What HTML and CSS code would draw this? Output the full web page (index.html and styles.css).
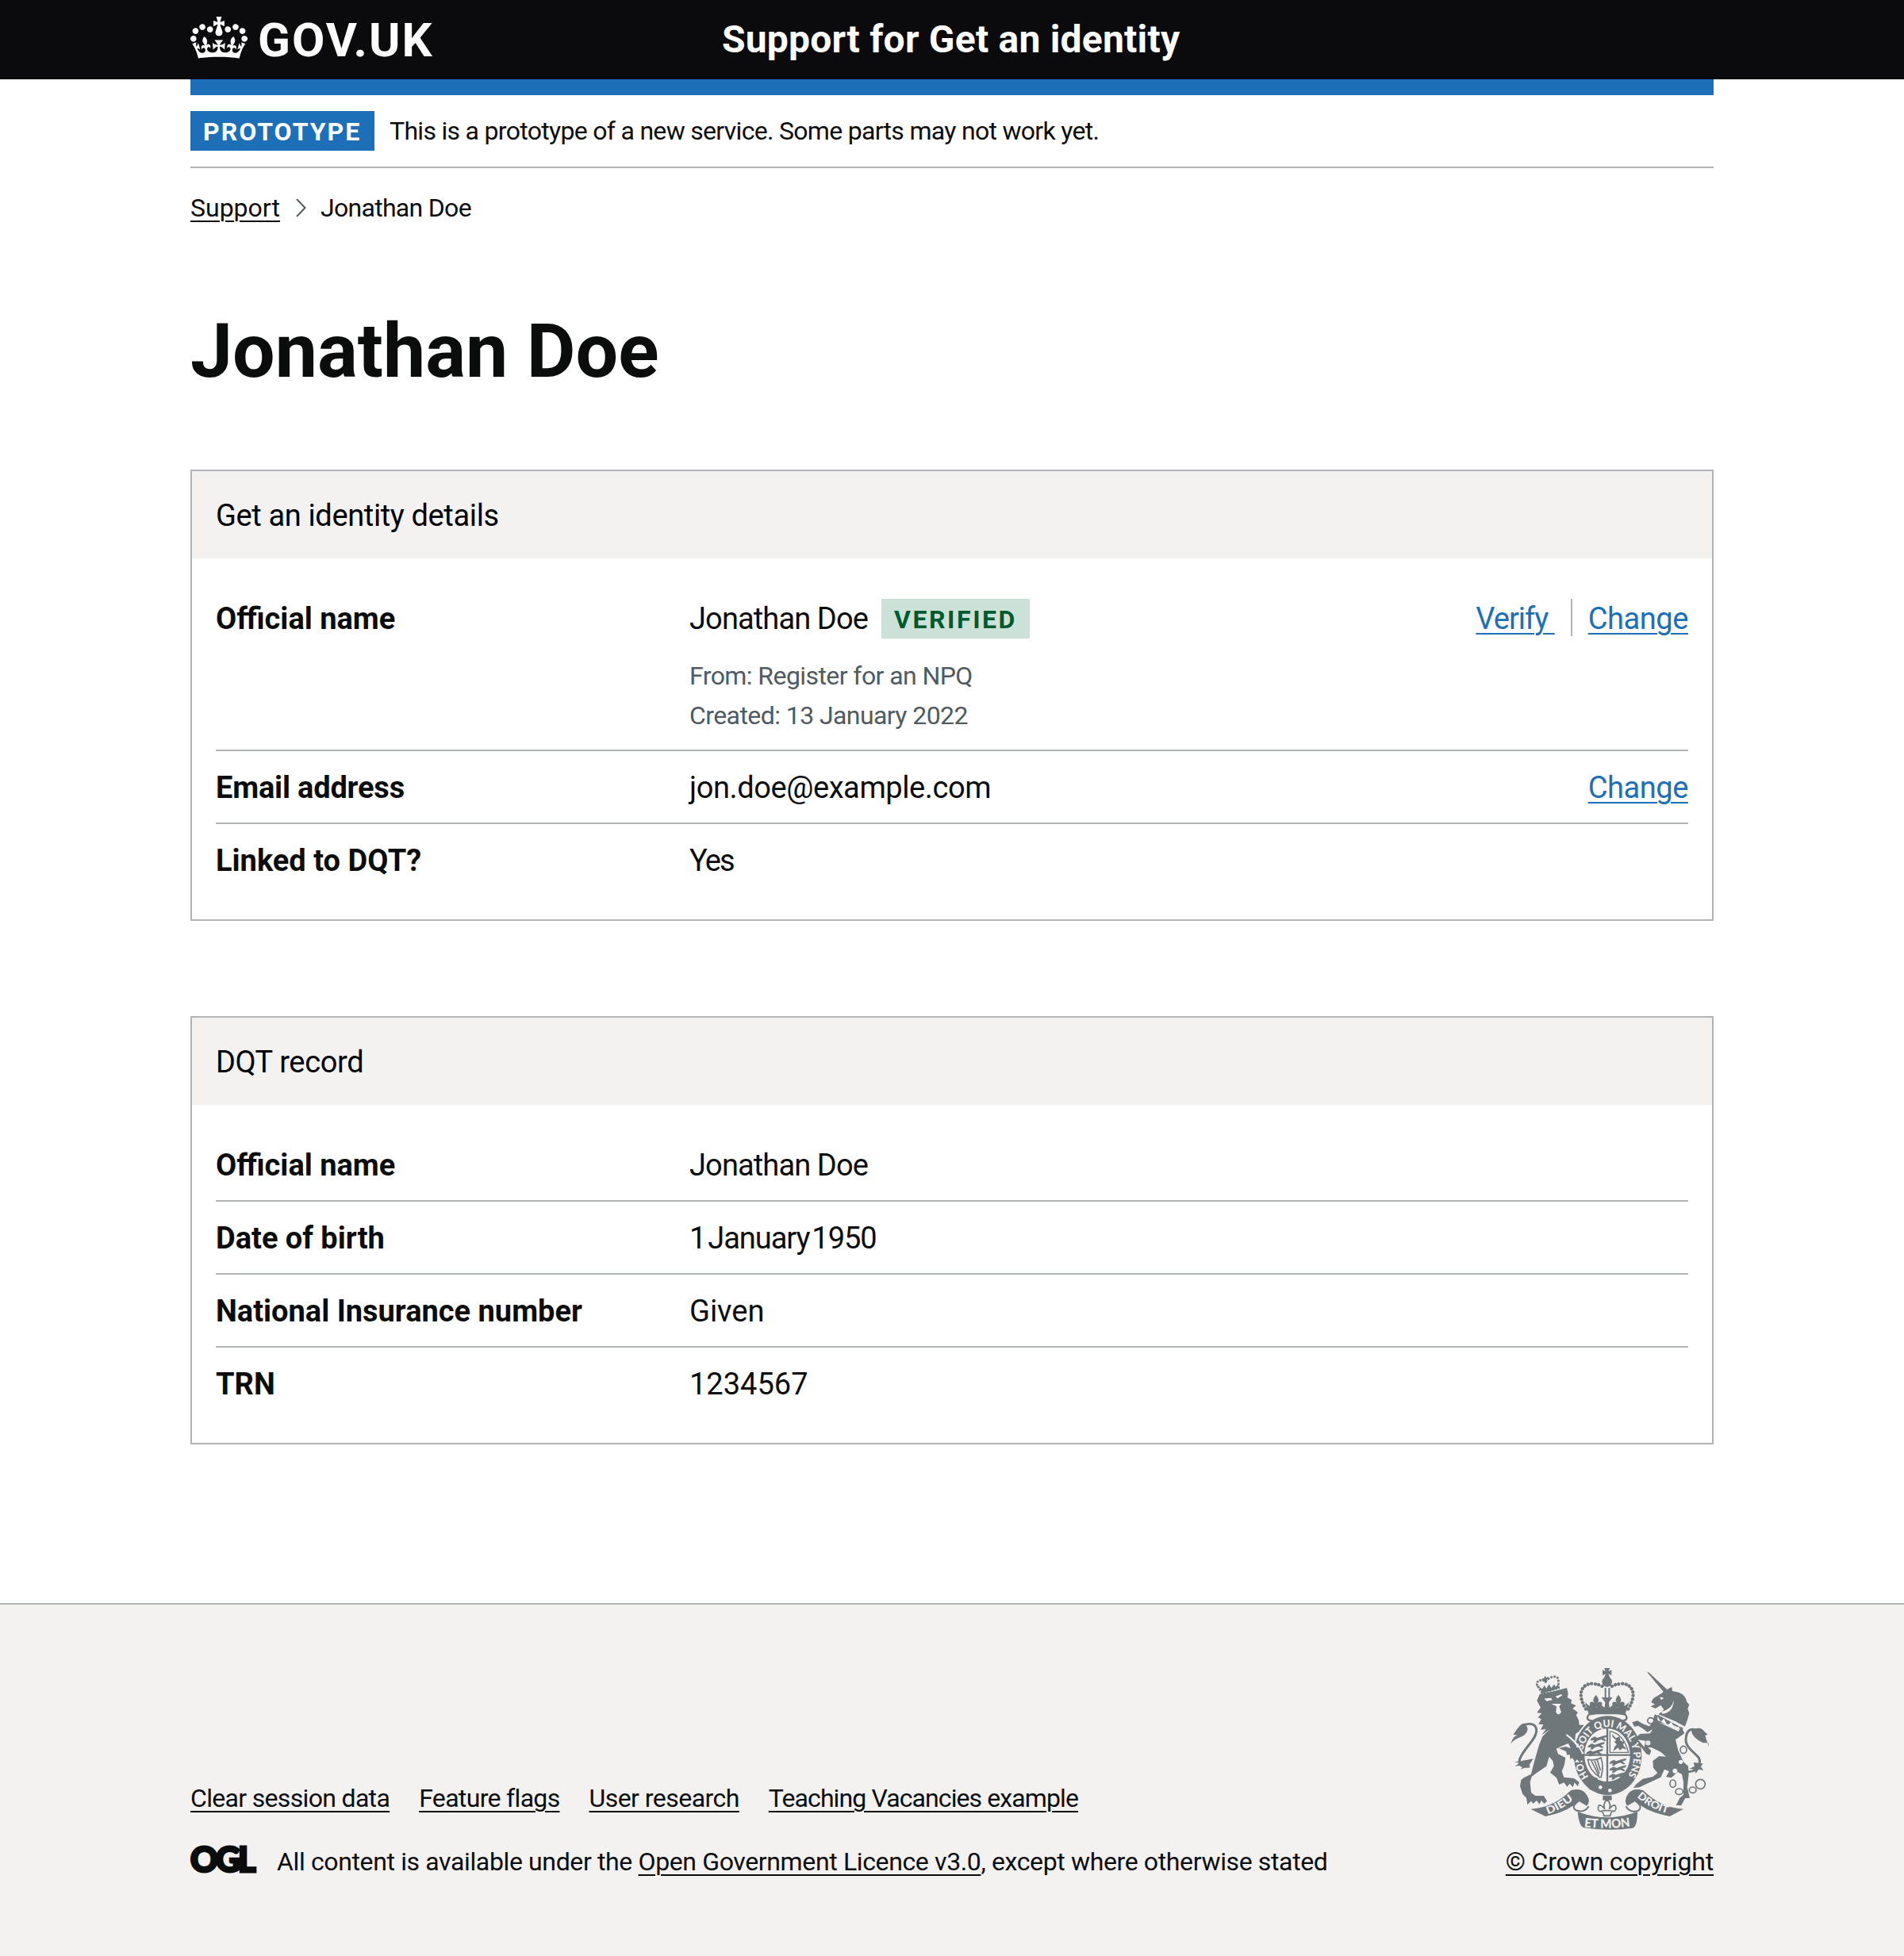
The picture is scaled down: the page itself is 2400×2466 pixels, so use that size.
FILE: index.html
```html
<!DOCTYPE html>
<html lang="en">
<head>
<meta charset="utf-8">
<title>Jonathan Doe - Support for Get an identity</title>
<link rel="stylesheet" href="styles.css">
</head>
<body>
<header class="header">
  <div class="container header-grid">
    <a class="logo" href="#">
      <svg class="crown" viewBox="0 0 132 97" aria-hidden="true"><path fill="currentColor" fill-rule="evenodd" d="M25 30.2c3.5 1.5 7.7-.2 9.1-3.7 1.5-3.6-.2-7.8-3.9-9.2-3.6-1.4-7.6.3-9.1 3.9-1.4 3.5.3 7.5 3.9 9zM9 39.5c3.6 1.5 7.8-.2 9.2-3.7 1.5-3.6-.2-7.8-3.9-9.1-3.6-1.5-7.6.2-9.1 3.8-1.4 3.5.3 7.5 3.8 9zM4.4 57.2c3.5 1.5 7.7-.2 9.1-3.8 1.5-3.6-.2-7.7-3.9-9.1-3.5-1.5-7.6.3-9.1 3.8-1.4 3.5.3 7.6 3.9 9.1zm38.3-21.4c3.5 1.5 7.7-.2 9.1-3.8 1.5-3.6-.2-7.7-3.9-9.1-3.6-1.5-7.6.3-9.1 3.8-1.3 3.6.4 7.7 3.9 9.1zm64.4-5.6c-3.6 1.5-7.8-.2-9.1-3.7-1.5-3.6.2-7.8 3.8-9.2 3.6-1.4 7.7.3 9.2 3.9 1.3 3.5-.4 7.5-3.9 9zm15.9 9.3c-3.6 1.5-7.7-.2-9.1-3.7-1.5-3.6.2-7.8 3.7-9.1 3.6-1.5 7.7.2 9.2 3.8 1.5 3.5-.3 7.5-3.8 9zm4.7 17.7c-3.6 1.5-7.8-.2-9.2-3.8-1.5-3.6.2-7.7 3.9-9.1 3.6-1.5 7.7.3 9.2 3.8 1.3 3.5-.4 7.6-3.9 9.1zM89.3 35.8c-3.6 1.5-7.8-.2-9.2-3.8-1.4-3.6.2-7.7 3.9-9.1 3.6-1.5 7.7.3 9.2 3.8 1.4 3.6-.3 7.7-3.9 9.1zM69.7 17.7l8.9 4.7V9.3l-8.9 2.8c-.2-.3-.5-.6-.9-.9L72.4 0H59.6l3.5 11.2c-.3.3-.6.5-.9.9l-8.8-2.8v13.1l8.8-4.7c.3.3.6.7.9.9l-5 15.4v.1c-.2.8-.4 1.6-.4 2.4 0 4.1 3.1 7.5 7 8.1h.2c.3 0 .7.1 1 .1.4 0 .7 0 1-.1h.2c4-.6 7.1-4.1 7.1-8.1 0-.8-.1-1.7-.4-2.4V34l-5.1-15.4c.4-.2.7-.6 1-.9zM66 92.8c16.9 0 32.8 1.1 47.1 3.2 4-16.9 8.9-26.7 14-33.5l-9.6-3.4c1 4.9 1.1 7.2 0 10.2-1.5-1.4-3-4.3-4.2-8.7L108.6 76c2.8-2 5-3.2 7.5-3.3-4.4 9.4-10 11.9-13.6 11.2-4.3-.8-6.3-4.6-5.6-7.9 1-4.7 5.7-5.9 8-.5 4.3-8.7-3-11.4-7.6-8.8 7.1-7.2 7.9-13.5 2.1-21.1-8 6.1-8.1 12.3-4.5 20.8-4.7-5.4-12.1-2.5-9.5 6.2 3.4-5.2 7.9-2 7.2 3.1-.6 4.3-6.4 7.8-13.5 7.2-10.3-.9-10.9-8-11.2-13.8 2.5-.5 7.1 1.8 11 7.3L80.2 60c-4.1 4.4-8 5.3-12.3 5.4 1.4-4.4 8-11.6 8-11.6H55.5s6.4 7.2 7.9 11.6c-4.2-.1-8-1-12.3-5.4l1.4 16.4c3.9-5.5 8.5-7.7 10.9-7.3-.3 5.8-.9 12.8-11.1 13.8-7.2.6-12.9-2.9-13.5-7.2-.7-5 3.8-8.3 7.1-3.1 2.7-8.7-4.6-11.6-9.4-6.2 3.7-8.5 3.6-14.7-4.6-20.8-5.8 7.6-5 13.9 2.2 21.1-4.7-2.6-11.9.1-7.7 8.8 2.3-5.5 7.1-4.2 8.1.5.7 3.3-1.3 7.1-5.7 7.9-3.5.7-9-1.8-13.5-11.2 2.5.1 4.7 1.3 7.5 3.3l-4.7-15.4c-1.2 4.4-2.7 7.2-4.3 8.7-1.1-3-.9-5.3 0-10.2l-9.5 3.4c5 6.9 9.9 16.7 14 33.5 14.8-2.1 30.8-3.2 47.7-3.2z"/></svg>
      <span class="logotype">GOV.UK</span>
    </a>
    <a class="service" href="#">Support for Get an identity</a>
  </div>
</header>
<div class="container">
  <div class="phase">
    <strong class="tag tag-blue">PROTOTYPE</strong>
    <span class="phase-text">This is a prototype of a new service. Some parts may not work yet.</span>
  </div>
  <nav class="crumbs">
    <a href="#">Support</a>
    <svg class="chevron" viewBox="0 0 13 22" aria-hidden="true"><path d="M1 0l10.500 11L1 22" fill="none" stroke="#505a5f" stroke-width="2"/></svg>
    <span class="here">Jonathan Doe</span>
  </nav>
  <main>
    <h1>Jonathan Doe</h1>
    <section class="card">
      <h2>Get an identity details</h2>
      <dl>
        <div class="row">
          <dt>Official name</dt>
          <dd>
            <div class="name-line"><span class="name">Jonathan Doe</span><strong class="tag tag-green">VERIFIED</strong></div>
            <p class="meta">From: Register for an NPQ<br>Created: 13 January 2022</p>
          </dd>
          <dd class="actions"><a class="verify" href="#">Verify&nbsp;</a><span class="last-action"><a href="#">Change</a></span></dd>
        </div>
        <div class="row">
          <dt class="email-key">Email address</dt>
          <dd class="email">jon.doe@example.com</dd>
          <dd class="actions"><a href="#">Change</a></dd>
        </div>
        <div class="row">
          <dt>Linked to DQT?</dt>
          <dd class="tight">Yes</dd>
        </div>
      </dl>
    </section>
    <section class="card">
      <h2>DQT record</h2>
      <dl>
        <div class="row"><dt>Official name</dt><dd class="name">Jonathan Doe</dd></div>
        <div class="row"><dt>Date of birth</dt><dd class="date">1 January 1950</dd></div>
        <div class="row"><dt>National Insurance number</dt><dd>Given</dd></div>
        <div class="row"><dt>TRN</dt><dd>1234567</dd></div>
      </dl>
    </section>
  </main>
</div>
<footer class="footer">
  <div class="container footer-grid">
    <div class="footer-main">
      <nav class="footer-links">
        <a href="#">Clear session data</a>
        <a href="#">Feature flags</a>
        <a class="loose" href="#">User research</a>
        <a class="snug" href="#">Teaching Vacancies example</a>
      </nav>
      <div class="licence">
        <svg class="ogl" viewBox="0 0 82 36" role="img" aria-label="OGL"><text x="0" y="33" textLength="82" lengthAdjust="spacing">OGL</text></svg>
        <span>All content is available under the <a href="#">Open Government Licence v3.0</a>, except where otherwise stated</span>
      </div>
    </div>
    <div class="copyright">
      <svg class="arms" viewBox="72 69 750 612" aria-hidden="true">
        <defs>
          <path id="motto" d="M368 480A97 113 0 1 1 514 478"/>
          <path id="dieu" d="M213 622Q270 602 318 560"/>
          <path id="droit" d="M550 556Q600 602 670 620"/>
          <path id="mon" d="M340 668Q437 682 535 666"/>
          <g id="sprig"><path d="M0-24q17 20 5 30q14-8 19 3l-4 13h-40l-4-13q5-11 19-3q-12-10 5-30z"/></g>
          <g id="lions"><path d="M0 8l14-8 10 5 18-6 20-5-2 8-13 4 12 9-8 2-13-6-14 5-8 7-9-1 5-8-14 1z"/></g>
        </defs>
        <g class="ink">
          <!-- lion -->
          <path d="M172 192L182 168 235 157 285 144 290 165 287 180 304 190 300 202 320 211 307 222 327 237 320 246 330 266 332 284 350 284 330 310 318 318 316 345 333 360 336 385 350 410 338 414 336 428 320 410 316 424 306 408 298 414 296 396 286 398 282 384 254 372 280 366 300 372 290 354 262 366 245 374 252 394 280 408 276 434 266 460 274 482 312 486 332 500 326 516 314 502 308 520 296 506 286 518 274 502 256 510 246 484 222 464 236 440 232 420 218 404 208 440 170 466 152 480 146 500 150 540 166 552 198 552 210 572 200 582 188 570 182 584 170 570 158 582 150 572 136 586 132 560 118 546 108 516 112 492 122 484 150 470 160 430 180 360 192 330 202 318 222 300 190 322 206 300 186 302 196 282 178 282 188 262 176 256 190 240 172 238 186 218z"/>
          <path d="M174 136C166 120 182 108 205 120C222 98 250 96 253 112L254 144 192 164z" fill="none" stroke-width="8" stroke-dasharray="8 4"/>
          <path d="M178 138l14 10 8-14 8 12 10-16 8 14 12-14 4 10 12-12-3 18-58 18zM202 98l6 7 8-2-1 8-8 2 2 11-8 1-2-10-7 2-1-8 8-2z"/>
          <!-- lion tail -->
          <path d="M145 440C102 448 100 424 112 402C135 360 168 338 170 308C171 282 150 274 118 285" fill="none" stroke-width="9"/>
          <path d="M72 356C80 338 84 324 100 324L82 320C94 308 98 290 120 278C142 288 142 308 122 324C102 334 86 338 72 356zM158 412L140 440 110 452 124 436 88 440 106 428 88 424 114 420z"/>
          <!-- imperial crown -->
          <path d="M426 69h22l-6 13 12-6v21l-12-6 6 14h-22l6-14-12 6V76l12 6z"/>
          <circle cx="437" cy="121" r="19"/>
          <path d="M357 224C322 168 340 128 382 128Q410 130 424 142M517 224C552 168 534 128 492 128Q464 130 450 142" fill="none" stroke-width="13" stroke-dasharray=".1 13.500" stroke-linecap="round"/>
          <path d="M431 144v36M445 144v36" fill="none" stroke-width="6"/>
          <path d="M354 198l16 14 8-10 20 16 10-14 20 14 2-20-14-18h42l-14 18 2 20 20-14 10 14 20-16 8 10 16-14-14 46H368z"/>
          <use href="#sprig" x="395" y="194"/><use href="#sprig" x="480" y="194"/>
          <path d="M368 245Q437 230 506 245Q522 266 490 270M368 245Q352 266 384 270" fill="none" stroke-width="7"/>
          <!-- garter -->
          <path fill-rule="evenodd" d="M440 250C512 250 568 318 568 400S512 549 440 549 312 482 312 400 368 250 440 250zM438 298C388 298 352 342 352 398S388 498 438 498 524 454 524 398 488 298 438 298z"/>
          <path d="M350 398h176M438 295v208" fill="none" stroke-width="7"/>
          <g><use href="#lions" x="376" y="328"/><use href="#lions" x="366" y="354"/><use href="#lions" x="360" y="380"/><use href="#lions" x="448" y="416"/><use href="#lions" x="448" y="442"/><use href="#lions" x="446" y="468"/></g>
          <path d="M448 308Q500 318 518 388H448z" fill="none" stroke-width="4"/>
          <path d="M456 318l14 16 14-6 4 16 14 4-4 12 14 18-16-6-10 8-8-10-18 14 6-18 8-8-10-10 8-6-14-12z"/>
          <path d="M364 414Q390 422 414 408Q426 440 414 484M364 414Q370 456 412 484M378 420l28 56M390 420l18 48M400 416l12 40" fill="none" stroke-width="5"/>
        </g>
        <g class="paper">
          <circle cx="412" cy="520" r="7"/><circle cx="448" cy="532" r="7"/>
          <path d="M200 184l26-2 4 8-22 4zM242 176l22-8 4 4-18 12z"/><path d="M226 204h38l-8 10 8 22q-12 16-20 0l2-22z"/>
          <path d="M284 318Q320 340 350 392L344 394Q314 346 282 324z"/>
        </g>
        <text class="motto" font-size="38"><textPath href="#motto" textLength="506" lengthAdjust="spacingAndGlyphs">HONI SOIT QUI MAL Y PENSE</textPath></text>
        <path d="M300 384l30-16 8 18 14 24-14 4-2 14-16-18-4 14-10-16z" fill="#6f777b"/>
        <path d="M364 496q12-20 34-8l-10 16 10 22q-24 10-34-14l8-6z" fill="none" stroke="#6f777b" stroke-width="6"/>
        <g class="ink">
          <!-- unicorn -->
          <path d="M588 84L596 86 664 150 682 140 684 156Q734 162 738 196L748 208 742 222 748 240 742 262 732 290 694 270 632 244 652 226 640 210 620 222 602 214 618 206 604 198 612 184 644 164 650 158z"/>
          <path d="M618 244L714 292 722 300 730 316 696 340 706 380 726 424 744 440 746 470 740 520 750 560 732 562 718 588 698 588 712 560 726 548 726 500 720 470 704 462 680 484 660 480 672 460 654 452 640 482 580 510 560 520 536 522 548 508 572 488 610 480 628 466 612 446 610 420 634 402 660 404 640 386 606 370 592 368 604 382 598 398 586 394 560 360 548 330 562 318 600 316 610 300 590 312 572 298 556 288 540 290 532 274 552 268 572 280 600 290z"/>
          <!-- unicorn tail -->
          <path d="M718 450C760 480 800 440 784 408C764 384 728 366 736 330C740 298 760 296 780 306" fill="none" stroke-width="9"/>
          <path d="M822 368L820 352 800 352Q758 332 756 306Q790 284 806 310L818 320 808 324zM800 430l-8 12 10 14-18-4-12 16-4-16-20-2 20-10-4-14z"/>
        </g>
        <g class="chain">
          <path d="M594 296L634 248 M626 274L708 312 720 292 M724 300L628 248"/>
          <ellipse cx="602" cy="268" rx="12" ry="11"/><ellipse cx="592" cy="352" rx="12" ry="12"/><ellipse cx="726" cy="378" rx="12" ry="14"/><ellipse cx="686" cy="506" rx="11" ry="14"/><ellipse cx="710" cy="536" rx="14" ry="11"/><ellipse cx="761" cy="530" rx="13" ry="11"/><circle cx="790" cy="508" r="18"/>
        </g>
        <g class="paper">
          <path d="M628 250l12 22 12-12 14 26 14-14 14 26 18-10-8 14-76-36z"/>
          <circle cx="694" cy="458" r="9"/><circle cx="716" cy="424" r="8"/><path d="M636 178l16 4-10 8zM642 234Q682 226 690 190Q686 240 646 242z"/>
          <path d="M554 340l28 4-4 24z"/>
        </g>
        <!-- ribbon -->
        <g class="ink">
          <path d="M148 602Q230 600 300 532Q340 520 358 546Q378 572 360 590L330 572Q290 612 204 630Z"/>
          <path d="M726 602Q644 600 574 532Q534 520 516 546Q498 572 514 590L544 572Q584 612 674 630Z"/>
          <path d="M326 612Q437 656 552 612Q552 668 534 674Q437 688 346 672Q330 662 326 612z"/>
          <path d="M330 572Q300 592 318 606Q350 620 368 592M544 572Q574 592 556 608Q526 620 508 592" fill="none" stroke-width="6"/>
        </g>
        <path d="M421 551h34v18h-34z" fill="#6f777b"/>
        <path d="M437 566q18 18 8 36q24-28 26-2q-2 14-14 10-8 10-8 18h-24q0-8-8-18-12 4-14-10 2-26 26 2-10-18 8-36z" fill="#f3f2f1" stroke="#6f777b" stroke-width="5"/>
        <path d="M420 608h34" stroke="#6f777b" stroke-width="5"/>
        <text class="motto" font-size="39"><textPath href="#dieu" textLength="112" lengthAdjust="spacingAndGlyphs">DIEU</textPath></text>
        <text class="motto" font-size="39"><textPath href="#droit" textLength="132" lengthAdjust="spacingAndGlyphs">DROIT</textPath></text>
        <text class="motto" font-size="47"><textPath href="#mon" startOffset="10" textLength="176" lengthAdjust="spacingAndGlyphs">ET MON</textPath></text>
      </svg>
      <a href="#">© Crown copyright</a>
    </div>
  </div>
</footer>
</body>
</html>
```
FILE: styles.css
```css
* { box-sizing: border-box; }
body {
  margin: 0;
  background: #fff;
  color: #0b0c0c;
  font-family: Roboto, "Liberation Sans", sans-serif;
  font-size: 32px;
  line-height: 50px;
}
a {
  color: inherit;
  text-decoration: underline;
  text-decoration-thickness: 2px;
  text-underline-offset: 5px;
}
h1, h2, dl, dd, p { margin: 0; }
.container { width: 1920px; margin: 0 auto; }

.header { height: 100px; background: #0b0b0d; color: #fff; }
.header a { text-decoration: none; }
.header-grid {
  display: grid;
  grid-template-columns: 670px 1fr;
  height: 120px;
  border-bottom: 20px solid #1d70b8;
}
.logo { display: flex; align-items: flex-start; }
.crown { width: 72px; height: 53px; margin-top: 21px; }
.logotype { margin: 21px 0 0 13px; font-size: 60px; font-weight: 700; line-height: 60px; letter-spacing: .034em; }
.service { margin-top: 20px; font-size: 48px; font-weight: 700; line-height: 60px; letter-spacing: .0045em; }

.phase {
  display: flex;
  gap: 19px;
  margin-top: 20px;
  padding: 20px 0;
  border-bottom: 2px solid #b1b4b6;
}
.phase-text { letter-spacing: -.0218em; }
.tag { padding: 2px 16px 0; height: 50px; line-height: 48px; font-size: 32px; font-weight: 700; }
.tag-blue { background: #1d70b8; color: #fff; width: 232px; letter-spacing: .063em; }
.tag-green { background: #cce2d8; color: #005a30; width: 187px; letter-spacing: .08em; }

.crumbs { display: flex; align-items: center; margin-top: 30px; line-height: 40px; }
.chevron { width: 13px; height: 22px; margin: 0 18px 0 20px; }
.here { letter-spacing: -.0216em; }

h1 { margin: 111px 0 99px; font-size: 95px; line-height: 100px; font-weight: 700; letter-spacing: 0; }

.card { margin-bottom: 120px; border: 2px solid #b1b4b6; font-size: 38px; }
.card h2 {
  padding: 31px 30px 29px;
  background: #f3f2f1;
  color: #000;
  font-size: 38px;
  font-weight: 400;
  line-height: 50px;
  letter-spacing: -.0095em;
}
dl { padding: 30px; }
.row {
  display: grid;
  grid-template-columns: 597px 1fr auto;
  padding: 21px 0 19px;
  border-bottom: 2px solid #b1b4b6;
}
.row:last-child { border-bottom: 0; }
dt { font-weight: 700; }
.name-line { display: flex; }
.name { letter-spacing: -.023em; }
.name-line .name { width: 242px; }
.email-key { letter-spacing: -.005em; }
.email { letter-spacing: -.0106em; }
.tight { letter-spacing: -.05em; }
.date { letter-spacing: -.028em; word-spacing: -.14em; }
.meta { margin: 22px 0 -1px; color: #505a5f; font-size: 32px; letter-spacing: -.018em; }
.actions { display: flex; color: #1d70b8; letter-spacing: -.011em; }
.verify { margin-right: 20px; letter-spacing: -.026em; }
.last-action { height: 47px; padding-left: 20px; border-left: 2px solid #b1b4b6; }

.footer { height: 445px; margin-top: 200px; padding-top: 80px; border-top: 2px solid #b1b4b6; background: #f3f2f1; }
.footer-grid { display: flex; justify-content: space-between; align-items: flex-end; }
.footer-links { display: flex; gap: 37px; margin-bottom: 30px; letter-spacing: -.021em; }
.footer-links .loose { letter-spacing: -.017em; }
.footer-links .snug { letter-spacing: -.028em; }
.licence { display: flex; gap: 27px; letter-spacing: -.0115em; }
.ogl { width: 82px; height: 36px; margin-top: 5px; overflow: visible; }
.ogl text { font-family: Lato, sans-serif; font-size: 43px; font-weight: 900; fill: #0b0c0c; stroke: #0b0c0c; stroke-width: 3px; }
.copyright { display: flex; flex-direction: column; align-items: flex-end; letter-spacing: -.005em; }
.arms { width: 250px; height: 204px; margin: 0 6px 15px 0; overflow: visible; }
.ink { fill: #6f777b; stroke: #6f777b; stroke-width: 0; }
.paper { fill: #f3f2f1; }
.chain { fill: #f3f2f1; fill-opacity: .9; stroke: #6f777b; stroke-width: 5; }
.motto { fill: #f3f2f1; font-family: Lato, sans-serif; font-weight: 900; letter-spacing: 0; }
```
